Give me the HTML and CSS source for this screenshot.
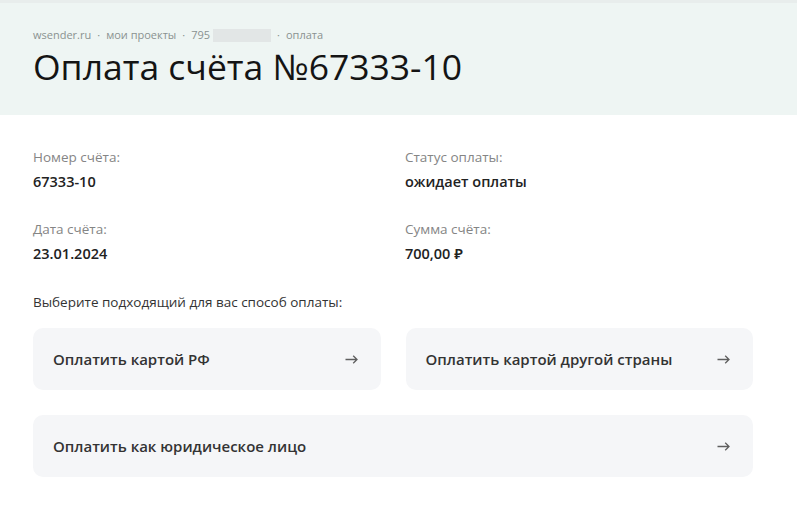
FILE: index.html
```html
<!DOCTYPE html>
<html lang="ru">
<head>
<meta charset="utf-8">
<title>Оплата счёта №67333-10</title>
<link rel="stylesheet" href="styles.css">
</head>
<body>
<header class="head">
  <nav class="crumbs">
    <span>wsender.ru</span><span class="dot">·</span><span>мои проекты</span><span class="dot">·</span><span>795</span><span class="blur"></span><span class="dot">·</span><span>оплата</span>
  </nav>
  <h1 class="title">Оплата счёта №67333-10</h1>
</header>
<main class="content">
  <div class="info">
    <div class="field"><div class="label">Номер счёта:</div><div class="value">67333-10</div></div>
    <div class="field"><div class="label">Статус оплаты:</div><div class="value">ожидает оплаты</div></div>
    <div class="field"><div class="label">Дата счёта:</div><div class="value">23.01.2024</div></div>
    <div class="field"><div class="label">Сумма счёта:</div><div class="value">700,00 ₽</div></div>
  </div>
  <p class="choose">Выберите подходящий для вас способ оплаты:</p>
  <div class="methods">
    <a class="method" href="#"><span>Оплатить картой РФ</span><svg class="arrow" viewBox="0 0 13 9" width="13" height="9"><path d="M0.5 4.5H12M8.2 0.8L12 4.5L8.2 8.2" fill="none" stroke="#5f5f5f" stroke-width="1.3"/></svg></a>
    <a class="method" href="#"><span>Оплатить картой другой страны</span><svg class="arrow" viewBox="0 0 13 9" width="13" height="9"><path d="M0.5 4.5H12M8.2 0.8L12 4.5L8.2 8.2" fill="none" stroke="#5f5f5f" stroke-width="1.3"/></svg></a>
    <a class="method wide" href="#"><span>Оплатить как юридическое лицо</span><svg class="arrow" viewBox="0 0 13 9" width="13" height="9"><path d="M0.5 4.5H12M8.2 0.8L12 4.5L8.2 8.2" fill="none" stroke="#5f5f5f" stroke-width="1.3"/></svg></a>
  </div>
</main>
</body>
</html>
```
FILE: styles.css
```css
* { box-sizing: border-box; }
html, body { margin: 0; padding: 0; background: #fff; }
body { font-family: "Open Sans", "Noto Sans", sans-serif; color: #1b1b1b; }

.head {
  background: #eef5f3;
  border-top: 3px solid #e8edec;
  height: 115px;
  padding: 25px 33px 0;
}
.crumbs {
  display: flex;
  align-items: center;
  font-size: 11px;
  line-height: 14px;
  color: #8a9290;
}
.crumbs .dot { margin: 0 6px; }
.crumbs .blur {
  display: inline-block;
  width: 58px;
  height: 13px;
  background: #e2e6e6;
  margin-left: 3px;
}
.title {
  margin: 4px 0 0;
  font-weight: 400;
  font-size: 35.5px;
  line-height: 40px;
  color: #141414;
}

.content { padding: 33px 44px 0 33px; }
.info {
  display: grid;
  grid-template-columns: 372px 1fr;
  row-gap: 28px;
}
.label {
  font-size: 13.5px;
  line-height: 18px;
  color: #858585;
}
.value {
  margin-top: 6px;
  font-size: 14.5px;
  line-height: 20px;
  font-weight: 600;
  color: #222;
}
.choose {
  margin: 29px 0 17px;
  font-size: 13.5px;
  line-height: 18px;
  color: #333;
}
.methods {
  display: grid;
  grid-template-columns: 1fr 1fr;
  gap: 25px;
}
.method {
  display: flex;
  align-items: center;
  justify-content: space-between;
  height: 62px;
  padding: 0 23px 0 20px;
  background: #f5f6f8;
  border-radius: 10px;
  text-decoration: none;
  color: #333;
  font-size: 15px;
  font-weight: 600;
}
.method.wide { grid-column: 1 / 3; }
.arrow { display: block; flex: none; }
```
